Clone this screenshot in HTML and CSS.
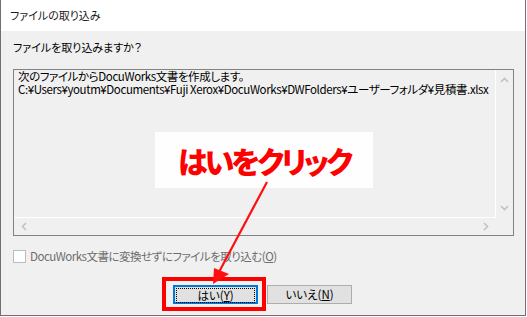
FILE: index.html
```html
<!DOCTYPE html>
<html lang="ja">
<head>
    <meta charset="UTF-8">
    <title>ファイルの取り込み</title>
    <link rel="stylesheet" href="styles.css">
</head>
<body>
<div class="window">
    <div class="titlebar">ファイルの取り込み</div>
    <div class="content">
        <p class="prompt">ファイルを取り込みますか？</p>

        <div class="textbox">
            <div class="text-area">
                <div>次のファイルからDocuWorks文書を作成します。</div>
                <div>C:¥Users¥youtm¥Documents¥Fuji Xerox¥DocuWorks¥DWFolders¥ユーザーフォルダ¥見積書.xlsx</div>
            </div>
            <div class="vscroll">
                <svg width="17" height="17" viewBox="0 0 17 17"><path d="M5 10 L8.5 6.5 L12 10" fill="none" stroke="#c2c2c2" stroke-width="1.6"/></svg>
                <svg width="17" height="17" viewBox="0 0 17 17"><path d="M5 7 L8.5 10.5 L12 7" fill="none" stroke="#c2c2c2" stroke-width="1.6"/></svg>
            </div>
            <div class="hscroll">
                <svg width="17" height="17" viewBox="0 0 17 17"><path d="M10 5 L6.5 8.5 L10 12" fill="none" stroke="#c2c2c2" stroke-width="1.6"/></svg>
                <svg width="17" height="17" viewBox="0 0 17 17"><path d="M7 5 L10.5 8.5 L7 12" fill="none" stroke="#c2c2c2" stroke-width="1.6"/></svg>
            </div>
            <div class="corner"></div>
        </div>

        <label class="check-row">
            <span class="checkbox"></span>
            <span class="check-label">DocuWorks文書に変換せずにファイルを取り込む(<u>O</u>)</span>
        </label>

        <div class="buttons">
            <button class="btn btn-default"><span class="focus">はい(<u>Y</u>)</span></button>
            <button class="btn">いいえ(<u>N</u>)</button>
        </div>
    </div>

    <!-- annotation drawn over the dialog -->
    <div class="callout">はいをクリック</div>
    <div class="highlight"></div>
    <svg class="arrow" width="527" height="317" viewBox="0 0 527 317">
        <line x1="267" y1="182" x2="219" y2="272" stroke="#ff1010" stroke-width="2.2"/>
        <polygon points="213,284 214,268 229,274" fill="#ff1010"/>
    </svg>
</div>
</body>
</html>
```

FILE: styles.css
```css
body {
    margin: 0;
    width: 527px;
    height: 317px;
    background: #fff;
    font-family: "Noto Sans CJK JP", "Noto Sans", sans-serif;
    font-size: 11px;
    font-feature-settings: "palt";
    color: #000;
    overflow: hidden;
}
.window {
    position: relative;
    box-sizing: border-box;
    width: 526px;
    height: 316px;
    border: 1px solid #707070;
    border-top: none;
    background: #f0f0f0;
}
.titlebar {
    height: 31px;
    line-height: 30px;
    padding-left: 9px;
    background: #fff;
    color: #1a1a1a;
}
.content {
    padding: 8px 0 0 12px;
}
.prompt {
    margin: 0;
    line-height: 16px;
    height: 16px;
}
.textbox {
    display: grid;
    grid-template-columns: 482px 17px;
    grid-template-rows: 148px 17px;
    width: 499px;
    margin-top: 14px;
    border: 1px solid #828282;
    background: #f0f0f0;
}
.text-area {
    border-right: 1px solid #fff;
    border-bottom: 1px solid #fff;
    padding: 0 0 0 4px;
    font-size: 11.5px;
    letter-spacing: -0.4px;
    line-height: 13px;
    white-space: nowrap;
}
.vscroll {
    display: flex;
    flex-direction: column;
    justify-content: space-between;
    padding: 2px 0;
}
.hscroll {
    display: flex;
    justify-content: space-between;
    padding: 0 2px;
}
.corner {
    background: #f0f0f0;
}
.check-row {
    display: flex;
    align-items: center;
    gap: 4px;
    margin-top: 14px;
    height: 13px;
}
.checkbox {
    box-sizing: border-box;
    width: 13px;
    height: 13px;
    border: 1px solid #bcbcbc;
    background: #fff;
}
.check-label {
    color: #6d6d6d;
    font-size: 11.5px;
    letter-spacing: -0.5px;
    line-height: 13px;
}
.buttons {
    display: flex;
    gap: 9px;
    margin: 22px 0 0 160px;
}
.btn {
    box-sizing: border-box;
    width: 85px;
    height: 19px;
    padding: 0;
    border: 1px solid #adadad;
    background: #e1e1e1;
    font-family: inherit;
    font-size: 11.5px;
    font-feature-settings: "palt";
    line-height: 15px;
    color: #000;
}
.btn-default {
    border: 2px solid #0078d7;
    padding: 1px;
}
.focus {
    display: block;
    height: 13px;
    line-height: 12px;
    border: 1px dotted #000;
}
.callout {
    position: absolute;
    left: 154px;
    top: 132px;
    width: 218px;
    height: 56px;
    background: #fefefe;
    color: #ff0000;
    font-weight: 900;
    font-size: 30px;
    letter-spacing: -3px;
    line-height: 56px;
    text-align: center;
}
.highlight {
    position: absolute;
    left: 161px;
    top: 277px;
    width: 96px;
    height: 26px;
    border: 4px solid #ff0000;
}
.arrow {
    position: absolute;
    left: -1px;
    top: 0;
    pointer-events: none;
}
```
